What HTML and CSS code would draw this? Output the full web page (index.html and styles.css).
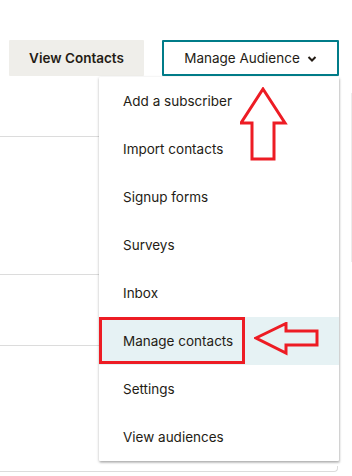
FILE: index.html
```html
<!DOCTYPE html>
<html>
<head>
<meta charset="utf-8">
<link rel="stylesheet" href="styles.css">
</head>
<body>
<div class="page">
  <div class="toolbar">
    <button class="btn btn-secondary">View Contacts</button>
    <div class="menu-wrap">
      <button class="btn btn-outline">Manage Audience
        <svg class="chev" width="10" height="8" viewBox="0 0 10 8"><path d="M1.5 2 L5 5.5 L8.5 2" fill="none" stroke="#241c15" stroke-width="2"/></svg>
      </button>
      <ul class="dropdown">
        <li class="item">Add a subscriber</li>
        <li class="item">Import contacts</li>
        <li class="item">Signup forms</li>
        <li class="item">Surveys</li>
        <li class="item">Inbox</li>
        <li class="item active"><span class="mark">Manage contacts</span></li>
        <li class="item">Settings</li>
        <li class="item">View audiences</li>
      </ul>
    </div>
  </div>
  <div class="table">
    <div class="row row-a"></div>
    <div class="row row-b"></div>
    <div class="row row-c"></div>
    <div class="row row-d"></div>
  </div>
  <div class="side-line"></div>
  <svg class="arrow-up" width="50" height="78" viewBox="0 0 50 78"><path d="M23 2 L45 36 L34 36 L34 72 L12 72 L12 36 L1 36 Z" fill="#fff" stroke="#ed1c24" stroke-width="3" stroke-linejoin="miter"/></svg>
  <svg class="arrow-left" width="66" height="36" viewBox="0 0 66 36"><path d="M2 16 L32 1.5 L32 9 L63 9 L63 23 L32 23 L32 31 Z" fill="#e6f2f4" stroke="#ed1c24" stroke-width="3"/></svg>
</div>
</body>
</html>
```
FILE: styles.css
```css
* { box-sizing: border-box; }
html, body { margin: 0; padding: 0; background: #fff; }
body {
  font-family: Inter, "Liberation Sans", Arial, sans-serif;
  color: #241c15;
  width: 352px;
  height: 476px;
  overflow: hidden;
}
.page { position: relative; width: 352px; height: 476px; }
.toolbar {
  display: flex;
  padding: 40px 0 0 9px;
  gap: 18px;
  height: 76px;
}
.btn {
  font-family: inherit;
  font-size: 13.5px;
  height: 36px;
  border-radius: 1px;
  color: #241c15;
  cursor: pointer;
  display: flex;
  align-items: center;
  justify-content: center;
}
.btn-secondary {
  width: 135px;
  background: #efeeea;
  border: 0;
  font-weight: 600;
}
.menu-wrap { position: relative; z-index: 5; }
.btn-outline {
  width: 177px;
  background: #fff;
  border: 2px solid #007c89;
  gap: 7px;
  padding-top: 1px;
}
.chev { margin-top: 1px; }
.dropdown {
  position: absolute;
  top: 37px;
  left: -63px;
  width: 240px;
  margin: 0;
  padding: 0;
  list-style: none;
  background: #fff;
  box-shadow: 0 1px 3px rgba(0,0,0,0.28), 1px 2px 2px rgba(0,0,0,0.12);
  border-radius: 1px;
}
.item {
  height: 48px;
  display: flex;
  align-items: center;
  padding-left: 24px;
  font-size: 13.5px;
}
.item.active { background: #e6f2f4; padding-left: 0; }
.mark {
  display: flex;
  align-items: center;
  height: 47px;
  width: 146px;
  padding-left: 21px;
  border: 3px solid #ed1c24;
  margin-top: -1px;
}
.table {
  width: 338px;
  margin-top: 60px;
  display: flex;
  flex-direction: column;
}
.row { border-top: 1px solid #dcdcdc; }
.row-a { height: 138px; }
.row-b { height: 71px; }
.row-c { height: 121px; }
.row-d {
  height: 6px;
  border-top: 0;
  border-bottom: 1px solid #dcdcdc;
  border-right: 1px solid #dcdcdc;
  border-bottom-right-radius: 4px;
}
.side-line {
  position: absolute;
  left: 351px;
  top: 93px;
  width: 1px;
  height: 169px;
  background: #ececec;
}
.arrow-up { position: absolute; left: 240px; top: 87px; z-index: 10; }
.arrow-left { position: absolute; left: 254px; top: 322px; z-index: 10; }
```
